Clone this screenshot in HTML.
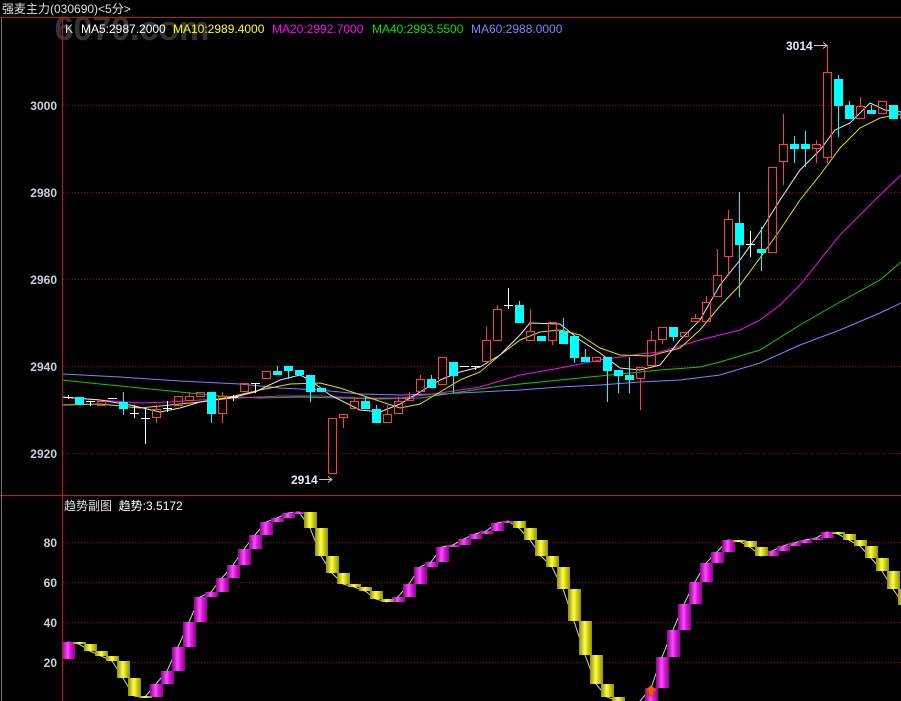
<!DOCTYPE html>
<html><head><meta charset="utf-8"><style>
html,body{margin:0;padding:0;background:#000;width:901px;height:701px;overflow:hidden}
svg{position:absolute;left:0;top:0}
.t{font-family:"Liberation Sans","Noto Sans CJK SC",sans-serif}
</style></head><body>
<svg width="901" height="701" viewBox="0 0 901 701" xmlns="http://www.w3.org/2000/svg">
<defs>
<linearGradient id="gm" x1="0" x2="1" y1="0" y2="0"><stop offset="0" stop-color="#900090"/><stop offset="0.45" stop-color="#ff50ff"/><stop offset="0.6" stop-color="#e020e0"/><stop offset="1" stop-color="#900090"/></linearGradient>
<linearGradient id="gy" x1="0" x2="1" y1="0" y2="0"><stop offset="0" stop-color="#909000"/><stop offset="0.45" stop-color="#ffff50"/><stop offset="0.6" stop-color="#e0e020"/><stop offset="1" stop-color="#909000"/></linearGradient>
<clipPath id="cu"><rect x="63" y="18" width="838" height="476"/></clipPath>
<clipPath id="cl"><rect x="63" y="497" width="838" height="204"/></clipPath>
</defs>
<text x="62" y="40" class="t" font-size="34" font-weight="bold" fill="#3a3a3a" opacity="0.9" text-anchor="middle" dx="70">6070.com</text>
<!-- frame -->
<line x1="0" y1="17.5" x2="901" y2="17.5" stroke="#c01818"/>
<line x1="62.5" y1="17" x2="62.5" y2="701" stroke="#c01818"/>
<line x1="0" y1="495.5" x2="901" y2="495.5" stroke="#c01818"/>
<line x1="1.5" y1="17" x2="1.5" y2="701" stroke="#707070"/>
<!-- grid -->
<g stroke="#a00000" stroke-dasharray="1,2">
<line x1="63" y1="105.5" x2="901" y2="105.5"/><line x1="63" y1="192.5" x2="901" y2="192.5"/><line x1="63" y1="279.5" x2="901" y2="279.5"/><line x1="63" y1="366.5" x2="901" y2="366.5"/><line x1="63" y1="453.5" x2="901" y2="453.5"/>
<line x1="63" y1="542.5" x2="901" y2="542.5"/><line x1="63" y1="582.5" x2="901" y2="582.5"/><line x1="63" y1="622.5" x2="901" y2="622.5"/><line x1="63" y1="662.5" x2="901" y2="662.5"/>
</g>
<g class="t" font-size="12" font-weight="bold" fill="#c8d0dc" text-anchor="end">
<text x="57" y="110">3000</text><text x="57" y="197">2980</text><text x="57" y="284">2960</text><text x="57" y="371">2940</text><text x="57" y="458">2920</text>
<text x="57" y="547">80</text><text x="57" y="587">60</text><text x="57" y="627">40</text><text x="57" y="667">20</text>
</g>
<text x="2" y="13" class="t" font-size="12" fill="#e0e0e0">强麦主力(030690)&lt;5分&gt;</text>
<g class="t" font-size="12">
<text x="65" y="33" fill="#e0e0e0">K</text>
<text x="81" y="33" fill="#ffffff">MA5:2987.2000</text>
<text x="173" y="33" fill="#ffff00">MA10:2989.4000</text>
<text x="272" y="33" fill="#ff00ff">MA20:2992.7000</text>
<text x="372" y="33" fill="#00e000">MA40:2993.5500</text>
<text x="471" y="33" fill="#8080ff">MA60:2988.0000</text>
</g>
<text x="64" y="510" class="t" font-size="12" fill="#e0e0e0">趋势副图&#160;&#160;<tspan fill="#ffffff">趋势:3.5172</tspan></text>
<g clip-path="url(#cu)">
<g fill="none" stroke-width="1">
<polyline stroke="#8080ff" points="62,374 120,377 180,381 240,384 280,388 320,390 360,394 400,395 440,394 480,392 520,390 560,387 600,385 640,382 680,380 720,375 760,363 800,345 840,330 880,313 901,303"/>
<polyline stroke="#00d000" points="62,380 100,384 140,388 180,392 220,396 260,398 300,397 340,398 380,399 420,398 460,392 500,386 540,382 580,378 620,374 660,370 700,367 720,362 760,350 800,325 840,302 880,280 901,262"/>
<polyline stroke="#ff00ff" points="62,397 100,400 140,403 170,402 200,400 240,398 280,396 320,396 360,398 400,398 440,393 480,387 520,375 560,368 600,360 640,354 660,352 700,340 740,330 760,320 780,305 800,285 820,260 840,235 860,215 880,195 901,175"/>
<polyline stroke="#e0e000" points="62,405 100,404 140,408 170,405 200,402 230,397 260,390 290,384 320,383 340,388 370,398 400,408 420,404 440,392 460,380 480,372 500,355 520,340 540,332 560,330 580,335 600,348 620,355 650,356 680,348 700,330 720,306 740,285 760,258 780,230 800,200 820,175 840,148 860,128 880,118 901,114"/>
<polyline stroke="#e8e8e8" points="62,397 100,400 130,405 160,412 180,408 200,402 230,398 255,392 280,380 300,375 310,380 330,395 360,410 380,412 400,404 420,392 440,380 460,372 480,367 500,355 520,335 530,323 560,324 580,340 600,353 620,368 640,370 660,365 680,340 700,320 720,285 740,260 760,232 780,200 800,170 820,150 835,130 850,123 870,103 885,110 901,112"/>
</g>
<!-- red candles -->
<g stroke="#ff3c3c" fill="none">
<path d="M156.5 405V409M156.5 418V423M189.5 392V396M222.5 392V396M222.5 414V423M343.5 418V428M354.5 397V401M387.5 405V414M398.5 397V401M409.5 392V397M420.5 375V379M486.5 327V340M497.5 305V309M530.5 309V331M552.5 341V345M640.5 379V410M651.5 331V340M662.5 340V344M695.5 314V318M706.5 296V302M717.5 249V275M728.5 210V219M728.5 257V276M783.5 114V144M783.5 162V185M816.5 140V144M816.5 149V163M827.5 45V72M827.5 158V163M860.5 97V106"/>
<rect x="97.5" y="401.5" width="8" height="4"/><rect x="152.5" y="409.5" width="8" height="8"/><rect x="174.5" y="396.5" width="8" height="9"/><rect x="185.5" y="396.5" width="8" height="4"/><rect x="196.5" y="392.5" width="8" height="4"/><rect x="218.5" y="396.5" width="8" height="17"/><rect x="240.5" y="383.5" width="8" height="8"/><rect x="262.5" y="371.5" width="8" height="7"/><rect x="328.5" y="418.5" width="8" height="55"/><rect x="339.5" y="414.5" width="8" height="3"/><rect x="350.5" y="401.5" width="8" height="7"/><rect x="383.5" y="414.5" width="8" height="8"/><rect x="394.5" y="401.5" width="8" height="12"/><rect x="405.5" y="397.5" width="8" height="3"/><rect x="416.5" y="379.5" width="8" height="12"/><rect x="438.5" y="357.5" width="8" height="27"/><rect x="482.5" y="340.5" width="8" height="21"/><rect x="493.5" y="309.5" width="8" height="31"/><rect x="526.5" y="331.5" width="8" height="9"/><rect x="548.5" y="322.5" width="8" height="18"/><rect x="592.5" y="357.5" width="8" height="4"/><rect x="636.5" y="367.5" width="8" height="11"/><rect x="647.5" y="340.5" width="8" height="25"/><rect x="658.5" y="327.5" width="8" height="12"/><rect x="680.5" y="332.5" width="8" height="4"/><rect x="691.5" y="318.5" width="8" height="3"/><rect x="702.5" y="302.5" width="8" height="19"/><rect x="713.5" y="275.5" width="8" height="21"/><rect x="724.5" y="219.5" width="8" height="37"/><rect x="768.5" y="167.5" width="8" height="85"/><rect x="779.5" y="144.5" width="8" height="17"/><rect x="812.5" y="144.5" width="8" height="4"/><rect x="823.5" y="72.5" width="8" height="85"/><rect x="856.5" y="106.5" width="8" height="12"/><rect x="878.5" y="101.5" width="8" height="12"/><rect x="900.5" y="114.5" width="8" height="4"/>
</g>
<!-- cyan candles -->
<g stroke="#00ffff" fill="none"><path d="M123.5 392V415M211.5 392V423M277.5 366V375M288.5 366V379M310.5 375V402M365.5 397V409M376.5 405V423M431.5 375V388M453.5 362V393M519.5 301V323M563.5 318V344M574.5 336V363M585.5 349V362M607.5 357V402M618.5 370V393M629.5 357V393M673.5 327V341M739.5 192V297M761.5 227V271M794.5 136V163M805.5 131V167M838.5 75V137M849.5 101V119M871.5 105V114"/></g>
<g fill="#00ffff">
<rect x="75" y="397" width="9" height="8"/><rect x="119" y="402" width="9" height="7"/><rect x="207" y="392" width="9" height="22"/><rect x="273" y="371" width="9" height="4"/><rect x="284" y="366" width="9" height="5"/><rect x="295" y="370" width="9" height="5"/><rect x="306" y="375" width="9" height="17"/><rect x="317" y="388" width="9" height="4"/><rect x="361" y="401" width="9" height="8"/><rect x="372" y="409" width="9" height="14"/><rect x="427" y="379" width="9" height="9"/><rect x="449" y="362" width="9" height="14"/><rect x="515" y="305" width="9" height="18"/><rect x="537" y="336" width="9" height="5"/><rect x="559" y="331" width="9" height="13"/><rect x="570" y="336" width="9" height="22"/><rect x="581" y="357" width="9" height="5"/><rect x="603" y="357" width="9" height="14"/><rect x="614" y="370" width="9" height="6"/><rect x="625" y="375" width="9" height="5"/><rect x="669" y="327" width="9" height="10"/><rect x="735" y="223" width="9" height="22"/><rect x="757" y="249" width="9" height="4"/><rect x="790" y="144" width="9" height="5"/><rect x="801" y="144" width="9" height="5"/><rect x="834" y="79" width="9" height="27"/><rect x="845" y="105" width="9" height="14"/><rect x="867" y="110" width="9" height="4"/><rect x="889" y="105" width="9" height="14"/>
</g>
<!-- white crosses -->
<g stroke="#ffffff" fill="none"><path d="M64 397.5H73M68.5 395V399M86 401.5H95M90.5 401V406M108 398.5H117M130 413.5H139M134.5 405V418M141 418.5H150M145.5 408V444M163 408.5H172M167.5 401V412M229 397.5H238M233.5 395V401M251 383.5H260M255.5 383V393M460 366.5H469M471 366.5H480M475.5 366V370M504 305.5H513M508.5 288V309M746 244.5H755M750.5 231V257"/></g>
</g>
<text x="786" y="50" class="t" font-size="12" font-weight="bold" fill="#e8e8ff">3014</text>
<path d="M814 45.5H827M823 42.5L827 45.5L823 48.5" stroke="#c8c8c8" fill="none"/>
<text x="291" y="484" class="t" font-size="12" font-weight="bold" fill="#e8e8ff">2914</text>
<path d="M319 479.5H332M328 476.5L332 479.5L328 482.5" stroke="#c8c8c8" fill="none"/>
<!-- lower panel -->
<g clip-path="url(#cl)">
<polyline fill="none" stroke="#d0d0d0" stroke-width="1" points="68,642 79,644 90,651 101,656 112,661 123,678 134,696 145,697 156,684 167,671 178,647 189,622 200,597 211,592 222,578 233,565 244,549 255,535 266,522 277,518 288,513 299,512 310,528 321,556 332,573 343,584 354,587 365,591 376,599 387,602 398,597 409,584 420,567 431,562 442,547 453,545 464,539 475,534 486,531 497,523 508,521 519,528 530,540 541,556 552,567 563,589 574,621 585,655 596,684 607,697 618,701 629,712 640,701 651,688 662,657 673,630 684,604 695,582 706,563 717,552 728,540 739,541 750,547 761,556 772,551 783,546 794,543 805,540 816,538 827,532 838,534 849,540 860,546 871,558 882,571 893,589 904,605"/>
<g fill="url(#gm)">
<rect x="62" y="642" width="13" height="17"/><rect x="150" y="684" width="13" height="13"/><rect x="161" y="671" width="13" height="13"/><rect x="172" y="647" width="13" height="24"/><rect x="183" y="622" width="13" height="25"/><rect x="194" y="597" width="13" height="25"/><rect x="205" y="592" width="13" height="5"/><rect x="216" y="578" width="13" height="14"/><rect x="227" y="565" width="13" height="13"/><rect x="238" y="549" width="13" height="16"/><rect x="249" y="535" width="13" height="14"/><rect x="260" y="522" width="13" height="13"/><rect x="271" y="518" width="13" height="4"/><rect x="282" y="513" width="13" height="5"/><rect x="293" y="512" width="13" height="2"/>
<rect x="392" y="597" width="13" height="5"/><rect x="403" y="584" width="13" height="13"/><rect x="414" y="567" width="13" height="17"/><rect x="425" y="562" width="13" height="5"/><rect x="436" y="547" width="13" height="15"/><rect x="447" y="545" width="13" height="2"/><rect x="458" y="539" width="13" height="6"/><rect x="469" y="534" width="13" height="5"/><rect x="480" y="531" width="13" height="3"/><rect x="491" y="523" width="13" height="8"/><rect x="502" y="521" width="13" height="2"/>
<rect x="634" y="701" width="13" height="11"/><rect x="645" y="688" width="13" height="13"/><rect x="656" y="657" width="13" height="31"/><rect x="667" y="630" width="13" height="27"/><rect x="678" y="604" width="13" height="26"/><rect x="689" y="582" width="13" height="22"/><rect x="700" y="563" width="13" height="19"/><rect x="711" y="552" width="13" height="11"/><rect x="722" y="540" width="13" height="12"/>
<rect x="766" y="551" width="13" height="5"/><rect x="777" y="546" width="13" height="5"/><rect x="788" y="543" width="13" height="3"/><rect x="799" y="540" width="13" height="3"/><rect x="810" y="538" width="13" height="2"/><rect x="821" y="532" width="13" height="6"/>
</g>
<g fill="url(#gy)">
<rect x="73" y="642" width="13" height="2"/><rect x="84" y="644" width="13" height="7"/><rect x="95" y="651" width="13" height="5"/><rect x="106" y="656" width="13" height="5"/><rect x="117" y="661" width="13" height="17"/><rect x="128" y="678" width="13" height="18"/><rect x="139" y="696" width="13" height="2"/>
<rect x="304" y="512" width="13" height="16"/><rect x="315" y="528" width="13" height="28"/><rect x="326" y="556" width="13" height="17"/><rect x="337" y="573" width="13" height="11"/><rect x="348" y="584" width="13" height="3"/><rect x="359" y="587" width="13" height="4"/><rect x="370" y="591" width="13" height="8"/><rect x="381" y="599" width="13" height="3"/>
<rect x="513" y="521" width="13" height="7"/><rect x="524" y="528" width="13" height="12"/><rect x="535" y="540" width="13" height="16"/><rect x="546" y="556" width="13" height="11"/><rect x="557" y="567" width="13" height="22"/><rect x="568" y="589" width="13" height="32"/><rect x="579" y="621" width="13" height="34"/><rect x="590" y="655" width="13" height="29"/><rect x="601" y="684" width="13" height="13"/><rect x="612" y="697" width="13" height="4"/><rect x="623" y="701" width="13" height="11"/>
<rect x="733" y="540" width="13" height="2"/><rect x="744" y="541" width="13" height="6"/><rect x="755" y="547" width="13" height="9"/>
<rect x="832" y="532" width="13" height="2"/><rect x="843" y="534" width="13" height="6"/><rect x="854" y="540" width="13" height="6"/><rect x="865" y="546" width="13" height="12"/><rect x="876" y="558" width="13" height="13"/><rect x="887" y="571" width="13" height="18"/><rect x="898" y="589" width="13" height="16"/>
</g>
<path d="M651 685L645 691H648.5V696H653.5V691H657Z" fill="#ff5010" stroke="#a02000" stroke-width="0.5"/>
</g>
</svg>
</body></html>
